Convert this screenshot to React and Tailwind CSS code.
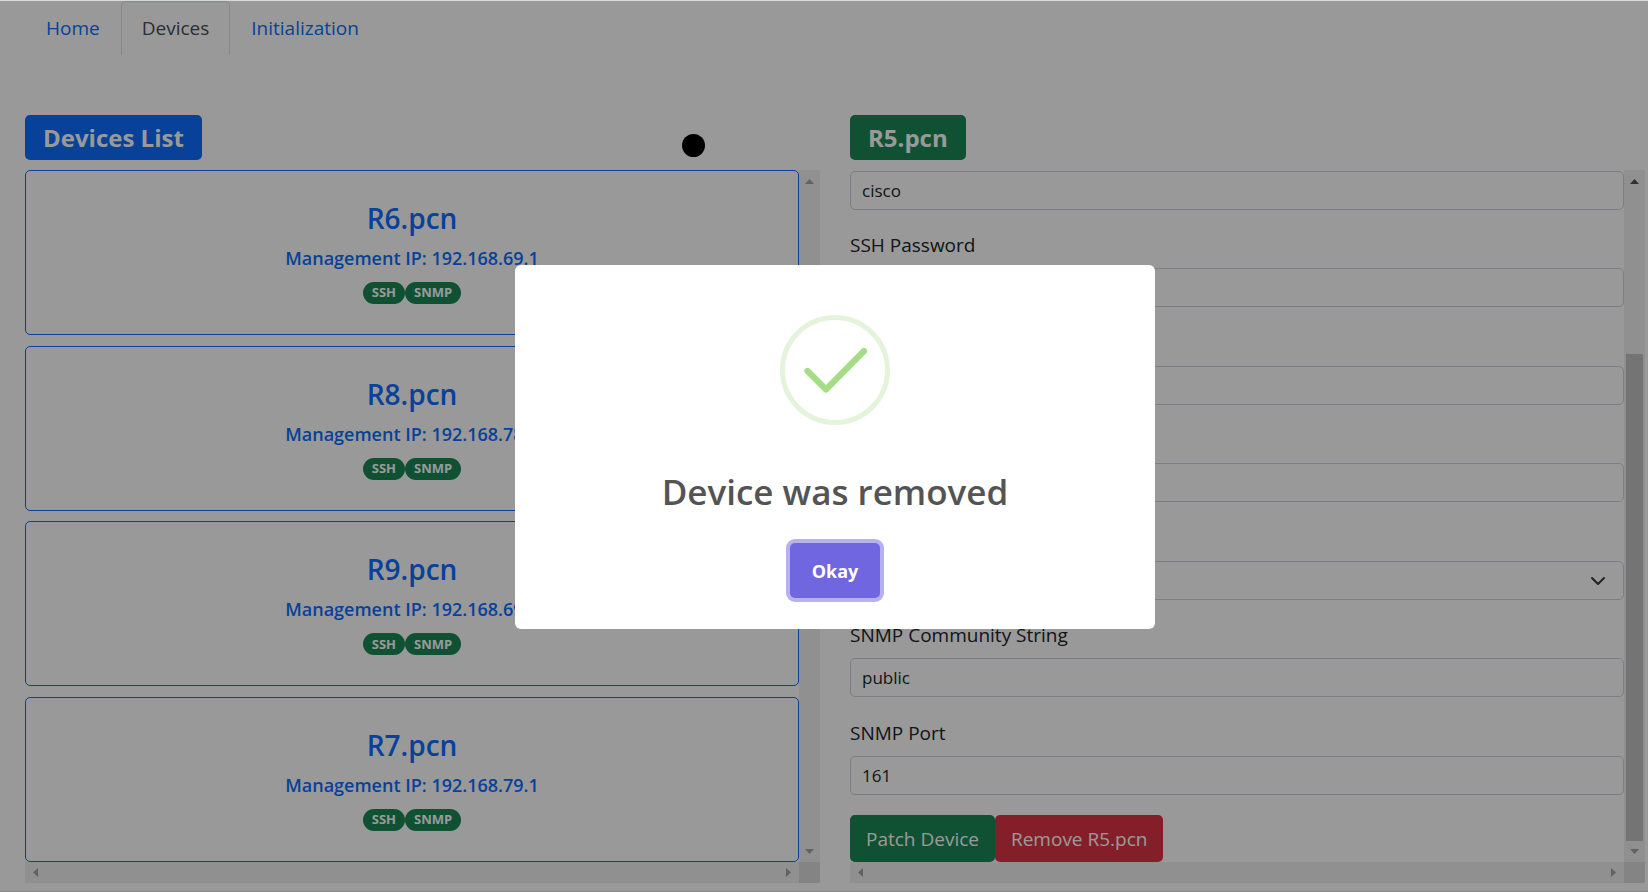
import React from "react";

const devices = [
  { name: "R6.pcn", ip: "192.168.69.1" },
  { name: "R8.pcn", ip: "192.168.78.1" },
  { name: "R9.pcn", ip: "192.168.69.2" },
  { name: "R7.pcn", ip: "192.168.79.1" },
];

function Arrow({ direction, active = false }) {
  const points = {
    up: "6,14 15,14 10.5,9",
    down: "6,8 15,8 10.5,13",
    left: "13,6 13,15 8,10.5",
    right: "8,6 8,15 13,10.5",
  }[direction];
  return (
    <svg
      viewBox="0 0 21 21"
      className={active ? "size-[21px] shrink-0 text-[#505050]" : "size-[21px] shrink-0 text-[#a3a3a3]"}
      aria-hidden="true"
    >
      <polygon points={points} fill="currentColor" />
    </svg>
  );
}

function ScrollPane({ children, thumb = false }) {
  return (
    <div className="grid flex-1 grid-cols-[minmax(0,1fr)_21px] grid-rows-[1fr_21px]">
      <div className="flex flex-col">{children}</div>
      <div className="flex flex-col justify-between bg-[#f1f1f1]">
        <Arrow direction="up" active={thumb} />
        {thumb && (
          <div className="flex flex-1 flex-col justify-end px-0.5">
            <div className="h-3/4 bg-[#c1c1c1]" />
          </div>
        )}
        <Arrow direction="down" />
      </div>
      <div className="flex justify-between bg-[#f1f1f1]">
        <Arrow direction="left" />
        <Arrow direction="right" />
      </div>
      <div className="bg-[#dcdcdc]" />
    </div>
  );
}

function Badge({ children }) {
  return (
    <span className="flex h-[22px] items-center rounded-full bg-[#198754] px-[9px] text-[13px] font-bold text-white">
      {children}
    </span>
  );
}

function DeviceCard({ name, ip }) {
  return (
    <button
      type="button"
      className="flex h-[165px] w-full flex-col items-center justify-center rounded-[5px] border border-[#0d6efd] pb-px text-[#0d6efd]"
    >
      <span className="text-[28px] leading-9 font-semibold">{name}</span>
      <span className="mt-2.5 text-lg leading-6 font-semibold">Management IP: {ip}</span>
      <span className="mt-3 flex">
        <Badge>SSH</Badge>
        <Badge>SNMP</Badge>
      </span>
    </button>
  );
}

const fieldClass =
  "block h-[39px] w-full appearance-none rounded-[5px] border border-[#ced4da] bg-white px-[11px] text-[17px] text-[#212529]";

function Field({ id, label, children }) {
  return (
    <div>
      <label htmlFor={id} className="mb-[7px] block text-[19px] leading-[31px] text-[#212529]">
        {label}
      </label>
      {children}
    </div>
  );
}

function DeviceForm() {
  return (
    <form className="flex flex-1 flex-col justify-between pt-px" onSubmit={(e) => e.preventDefault()}>
      <input aria-label="SSH Username" className={fieldClass} defaultValue="cisco" />
      <Field id="ssh-password" label="SSH Password">
        <input id="ssh-password" className={fieldClass} defaultValue="cisco" />
      </Field>
      <Field id="ssh-port" label="SSH Port">
        <input id="ssh-port" className={fieldClass} defaultValue="22" />
      </Field>
      <Field id="enable-secret" label="Enable Secret">
        <input id="enable-secret" className={fieldClass} defaultValue="cisco" />
      </Field>
      <Field id="snmp-version" label="SNMP Version">
        <div className="relative">
          <select id="snmp-version" className={fieldClass}>
            <option>2c</option>
          </select>
          <svg
            viewBox="0 0 16 16"
            className="pointer-events-none absolute top-3 right-[18px] size-4"
            fill="none"
            stroke="#343a40"
            strokeWidth="2"
            strokeLinecap="round"
            strokeLinejoin="round"
            aria-hidden="true"
          >
            <path d="M2 5l6 6 6-6" />
          </svg>
        </div>
      </Field>
      <Field id="snmp-community" label="SNMP Community String">
        <input id="snmp-community" className={fieldClass} defaultValue="public" />
      </Field>
      <Field id="snmp-port" label="SNMP Port">
        <input id="snmp-port" className={fieldClass} defaultValue="161" />
      </Field>
      <div className="flex">
        <button type="submit" className="h-[47px] rounded-[5px] bg-[#198754] px-4 pt-0.5 text-[19px] text-white">
          Patch Device
        </button>
        <button type="button" className="h-[47px] rounded-[5px] bg-[#dc3545] px-4 pt-0.5 text-[19px] text-white">
          Remove R5.pcn
        </button>
      </div>
    </form>
  );
}

function SuccessDialog() {
  return (
    <div className="fixed inset-0 flex items-center justify-center pt-0.5 pl-[22px]">
      <div
        role="dialog"
        aria-modal="true"
        aria-labelledby="dialog-title"
        className="flex w-[640px] flex-col items-center rounded-md bg-white pt-[50px] pb-[31px]"
      >
        <svg viewBox="0 0 110 110" className="size-[110px]" fill="none" aria-hidden="true">
          <circle cx="55" cy="55" r="52.5" stroke="#a5dc86" strokeOpacity="0.3" strokeWidth="5" />
          <path
            d="M27.500 56L46 74.500L84 36"
            stroke="#a5dc86"
            strokeWidth="6.200"
            strokeLinecap="round"
            strokeLinejoin="round"
          />
        </svg>
        <h2 id="dialog-title" className="mt-[45px] text-[35px] leading-[44px] font-semibold text-[#545454]">
          Device was removed
        </h2>
        <button
          type="button"
          className="mt-[29px] h-[55px] rounded-[5px] bg-[#7066e0] px-[22px] text-lg font-bold text-white ring-4 ring-[#7066e0]/50"
        >
          Okay
        </button>
      </div>
    </div>
  );
}

export default function App() {
  return (
    <div className="relative flex min-h-screen flex-col border-t border-b border-t-[#d6dad8] border-b-[#8c8c8c] bg-white font-['Open_Sans','Noto_Sans',sans-serif]">
      <nav className="flex h-[54px] pl-[25px] text-[19px]">
        <a href="#home" className="px-[21px] pt-[13px] text-[#0d6efd]">
          Home
        </a>
        <a
          href="#devices"
          aria-current="page"
          className="rounded-t-[5px] border border-b-0 border-[#dee2e6] px-5 pt-3 text-[#495057]"
        >
          Devices
        </a>
        <a href="#initialization" className="px-[21px] pt-[13px] text-[#0d6efd]">
          Initialization
        </a>
      </nav>
      <main className="mt-[60px] flex gap-[30px] pr-[3px] pl-[25px]">
        <section className="flex min-w-0 flex-1 flex-col gap-2.5">
          <h1 className="flex h-[45px] items-center self-start rounded-[5px] bg-[#0d6efd] px-[18px] text-2xl font-bold text-white">
            Devices List
          </h1>
          <ScrollPane>
            <div className="flex h-[692px] flex-col justify-between">
              {devices.map((device) => (
                <DeviceCard key={device.name} {...device} />
              ))}
            </div>
          </ScrollPane>
        </section>
        <section className="flex min-w-0 flex-1 flex-col gap-2.5">
          <h1 className="flex h-[45px] items-center self-start rounded-[5px] bg-[#198754] px-[18px] text-2xl font-bold text-white">
            R5.pcn
          </h1>
          <ScrollPane thumb>
            <DeviceForm />
          </ScrollPane>
        </section>
      </main>
      <div className="absolute inset-0 bg-black/40" />
      <div className="absolute top-[133px] left-[682px] size-[23px] rounded-full bg-black" />
      <SuccessDialog />
    </div>
  );
}
